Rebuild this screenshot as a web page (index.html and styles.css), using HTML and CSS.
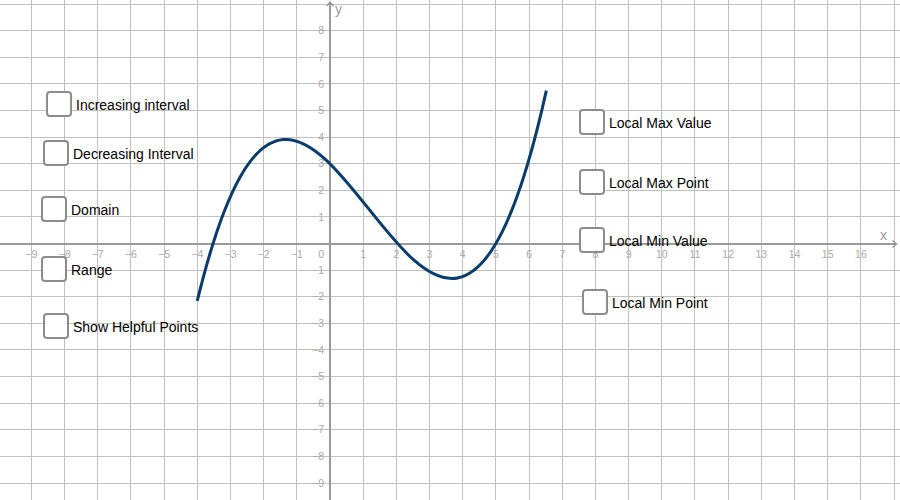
FILE: index.html
```html
<!DOCTYPE html>
<html lang="en">
<head>
<meta charset="utf-8">
<title>Graph</title>
<link rel="stylesheet" href="styles.css">
</head>
<body>
<div class="applet">
  <svg class="graph" width="900" height="500" viewBox="0 0 900 500" xmlns="http://www.w3.org/2000/svg">
    <g class="grid">
      <path d="M31.5 0V500M64.5 0V500M97.5 0V500M130.5 0V500M164.5 0V500M197.5 0V500M230.5 0V500M263.5 0V500M296.5 0V500M363.5 0V500M396.5 0V500M429.5 0V500M462.5 0V500M495.5 0V500M529.5 0V500M562.5 0V500M595.5 0V500M628.5 0V500M661.5 0V500M694.5 0V500M728.5 0V500M761.5 0V500M794.5 0V500M827.5 0V500M860.5 0V500M894.5 0V500"/>
      <path d="M0 4.5H900M0 30.5H900M0 57.5H900M0 83.5H900M0 110.5H900M0 137.5H900M0 163.5H900M0 190.5H900M0 216.5H900M0 270.5H900M0 296.5H900M0 323.5H900M0 349.5H900M0 376.5H900M0 403.5H900M0 429.5H900M0 456.5H900M0 483.5H900"/>
    </g>
    <g class="axes">
      <path d="M330 2V500"/>
      <path d="M0 244H896"/>
      <path class="arrow" d="M326.5 6L330 2.2L333.5 6"/>
      <path class="arrow" d="M892.5 240.5L896.5 244L892.5 247.5"/>
    </g>
    <text class="axis-name" x="335" y="14">y</text>
    <text class="axis-name" x="880" y="240">x</text>
    <g class="ticks-x">
      <text x="31.4" y="258">−9</text>
      <text x="64.6" y="258">−8</text>
      <text x="97.7" y="258">−7</text>
      <text x="130.9" y="258">−6</text>
      <text x="164.1" y="258">−5</text>
      <text x="197.3" y="258">−4</text>
      <text x="230.5" y="258">−3</text>
      <text x="263.6" y="258">−2</text>
      <text x="296.8" y="258">−1</text>
      <text x="363.2" y="258">1</text>
      <text x="396.4" y="258">2</text>
      <text x="429.5" y="258">3</text>
      <text x="462.7" y="258">4</text>
      <text x="495.9" y="258">5</text>
      <text x="529.1" y="258">6</text>
      <text x="562.3" y="258">7</text>
      <text x="595.4" y="258">8</text>
      <text x="628.6" y="258">9</text>
      <text x="661.8" y="258">10</text>
      <text x="695.0" y="258">11</text>
      <text x="728.2" y="258">12</text>
      <text x="761.3" y="258">13</text>
      <text x="794.5" y="258">14</text>
      <text x="827.7" y="258">15</text>
      <text x="860.9" y="258">16</text>
    </g>
    <g class="ticks-y">
      <text x="324" y="258">0</text>
      <text x="324" y="34.4">8</text>
      <text x="324" y="61">7</text>
      <text x="324" y="87.6">6</text>
      <text x="324" y="114.2">5</text>
      <text x="324" y="140.8">4</text>
      <text x="324" y="167.4">3</text>
      <text x="324" y="194">2</text>
      <text x="324" y="220.6">1</text>
      <text x="324" y="273.8">−1</text>
      <text x="324" y="300.4">−2</text>
      <text x="324" y="327">−3</text>
      <text x="324" y="353.6">−4</text>
      <text x="324" y="380.2">−5</text>
      <text x="324" y="406.8">−6</text>
      <text x="324" y="433.4">−7</text>
      <text x="324" y="460">−8</text>
      <text x="324" y="486.6">−9</text>
    </g>
    <path class="curve" d="M197.28 300.96C313.63 -179.23 429.98 616.06 546.33 90.63"/>
  </svg>

  <label class="check" style="left:46px;top:91px"><span class="box"></span><span class="text">Increasing interval</span></label>
  <label class="check" style="left:43px;top:140px"><span class="box"></span><span class="text">Decreasing Interval</span></label>
  <label class="check" style="left:41px;top:196px"><span class="box"></span><span class="text">Domain</span></label>
  <label class="check" style="left:41px;top:256px"><span class="box"></span><span class="text">Range</span></label>
  <label class="check" style="left:43px;top:313px"><span class="box"></span><span class="text">Show Helpful Points</span></label>
  <label class="check" style="left:579px;top:109px"><span class="box"></span><span class="text">Local Max Value</span></label>
  <label class="check" style="left:579px;top:169px"><span class="box"></span><span class="text">Local Max Point</span></label>
  <label class="check" style="left:579px;top:227px"><span class="box"></span><span class="text">Local Min Value</span></label>
  <label class="check" style="left:582px;top:289px"><span class="box"></span><span class="text">Local Min Point</span></label>
</div>
</body>
</html>
```

FILE: styles.css
```css
html, body {
  margin: 0;
  padding: 0;
  background: #ffffff;
}

.applet {
  position: relative;
  width: 900px;
  height: 500px;
  overflow: hidden;
  background: #ffffff;
  font-family: "Liberation Sans", Arial, sans-serif;
}

.graph {
  display: block;
}

.grid path {
  stroke: #c0c0c0;
  stroke-width: 1;
  fill: none;
  shape-rendering: crispEdges;
}

.axes path {
  stroke: #9a9a9a;
  stroke-width: 2;
  fill: none;
}

.axes path.arrow {
  stroke-width: 1.5;
  stroke-linejoin: miter;
}

.axis-name {
  font-family: "Liberation Sans", Arial, sans-serif;
  font-size: 14px;
  fill: #9a9a9a;
}

.ticks-x text,
.ticks-y text {
  font-family: "Liberation Sans", Arial, sans-serif;
  font-size: 10.5px;
  fill: #a8a8a8;
}

.ticks-x text {
  text-anchor: middle;
}

.ticks-y text {
  text-anchor: end;
}

.curve {
  fill: none;
  stroke: #073c6c;
  stroke-width: 3;
  stroke-linecap: butt;
}

.check {
  position: absolute;
  display: flex;
  align-items: center;
  gap: 4px;
  height: 26px;
  white-space: nowrap;
}

.box {
  box-sizing: border-box;
  width: 26px;
  height: 26px;
  border: 2px solid #8c8c8c;
  border-radius: 4px;
  background: #ffffff;
  flex: none;
}

.text {
  font-size: 14px;
  color: #000000;
  line-height: 16px;
  padding-top: 2px;
}
```
